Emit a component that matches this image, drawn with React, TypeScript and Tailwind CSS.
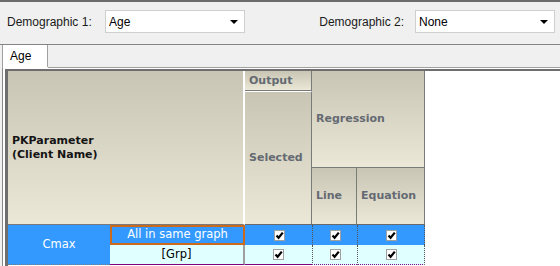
import { ReactNode } from "react";

function Dropdown({ value, width }: { value: string; width: string }) {
  return (
    <div
      className={`flex h-[23px] items-center justify-between border border-[#cfcfcf] bg-white pl-[3px] pr-[6px] text-[12px] text-black ${width}`}
    >
      <span>{value}</span>
      <svg width="8" height="4" viewBox="0 0 8 4">
        <path d="M0 0 L8 0 L4 4 Z" fill="#000" />
      </svg>
    </div>
  );
}

function Check() {
  return (
    <span className="flex h-[11px] w-[11px] items-center justify-center border border-[#a0a0a0] bg-white">
      <svg width="9" height="9" viewBox="0 0 9 9">
        <path d="M1.5 4.5 L3.6 6.8 L7.8 1.6" fill="none" stroke="#000" strokeWidth="2.2" />
      </svg>
    </span>
  );
}

function Head({ children, className }: { children: ReactNode; className: string }) {
  return (
    <div
      className={`flex items-center bg-gradient-to-b from-[#c9c5b4] to-[#ece8d8] pl-[4px] text-[11px] leading-[14px] font-bold ${className}`}
    >
      {children}
    </div>
  );
}

export default function App() {
  const gridFont = { fontFamily: '"DejaVu Sans", Verdana, sans-serif' };

  return (
    <div
      className="h-[266px] w-[560px] overflow-hidden bg-[#f0f0f0]"
      style={{ fontFamily: '"Liberation Sans", Arial, sans-serif' }}
    >
      <div className="h-[2px] bg-[#6b6b6b]" />

      <div className="flex h-[42px] items-start pt-[8px] text-[12px] text-[#1a1a1a]">
        <div className="flex h-[23px] w-[105px] items-center pl-[7px]">Demographic 1:</div>
        <Dropdown value="Age" width="w-[140px]" />
        <div className="ml-auto flex h-[23px] items-center pr-[11px]">Demographic 2:</div>
        <Dropdown value="None" width="w-[140px]" />
        <div className="w-[5px]" />
      </div>

      <div className="h-px bg-[#848484]" />

      <div className="flex h-[22px]">
        <div className="ml-[2px] flex w-[46px] items-center border-x border-[#a0a0a0] bg-white pl-[7px] text-[12px] text-black">
          Age
        </div>
        <div className="flex-1" />
      </div>

      <div className="flex">
        <div className="ml-[2px] w-[46px] border-l border-[#a0a0a0] bg-white" />
        <div className="h-px flex-1 bg-[#a0a0a0]" />
      </div>

      <div className="ml-[2px] h-[200px] border-l border-[#8a8a8a] bg-white pt-px pl-[2px]">
        <div className="h-full border-t-2 border-l-[3px] border-[#6e6e6e] bg-white" style={gridFont}>
          <div className="grid grid-cols-[102px_135px_67px_45px_68px] grid-rows-[20px_77px_57px_20px_20px]">
            <Head className="col-span-2 row-span-3 border-r-2 border-b border-r-white border-b-[#7a7a7a] text-[#141414]">
              <span>
                PKParameter
                <br />
                (Client Name)
              </span>
            </Head>
            <Head className="border-r border-b border-[#7a7a7a] text-[#646a72]">Output</Head>
            <Head className="col-span-2 row-span-2 border-r border-b border-[#7a7a7a] text-[#646a72]">
              Regression
            </Head>
            <Head className="row-span-2 border-t border-r border-b border-t-white border-r-[#7a7a7a] border-b-[#6a6a6a] text-[#646a72]">
              Selected
            </Head>
            <Head className="border-r border-b border-r-[#7a7a7a] border-b-[#6a6a6a] text-[#646a72]">Line</Head>
            <Head className="border-r border-b border-r-[#7a7a7a] border-b-[#6a6a6a] text-[#646a72]">
              Equation
            </Head>

            <div className="row-span-2 flex items-center justify-center border-b border-dotted border-[#7a7a7a] bg-[#3399ff] text-[11.5px] text-white">
              Cmax
            </div>
            <div className="flex items-center justify-center border-2 border-[#c96a1c] bg-[#3399ff] text-[11.5px] text-white">
              All in same graph
            </div>
            <div className="flex items-center justify-center border-l border-[#3399ff] bg-[#3399ff]">
              <Check />
            </div>
            <div className="flex items-center justify-center border-l border-dotted border-[#555] bg-[#3399ff]">
              <Check />
            </div>
            <div className="flex items-center justify-center border-x border-dotted border-[#555] bg-[#3399ff]">
              <Check />
            </div>

            <div className="flex items-center justify-center border-r-2 border-b border-r-[#a0a0a0] border-b-[#800080] bg-[#e0ffff] text-[11.5px] text-black">
              [Grp]
            </div>
            <div className="flex items-center justify-center border-b border-[#800080] bg-[#e0ffff]">
              <Check />
            </div>
            <div className="flex items-center justify-center border-b border-l border-dotted border-b-[#800080] border-l-[#555] bg-[#e0ffff]">
              <Check />
            </div>
            <div className="flex items-center justify-center border-x border-b border-dotted border-b-[#800080] border-x-[#555] bg-[#e0ffff]">
              <Check />
            </div>
          </div>
        </div>
      </div>
    </div>
  );
}
